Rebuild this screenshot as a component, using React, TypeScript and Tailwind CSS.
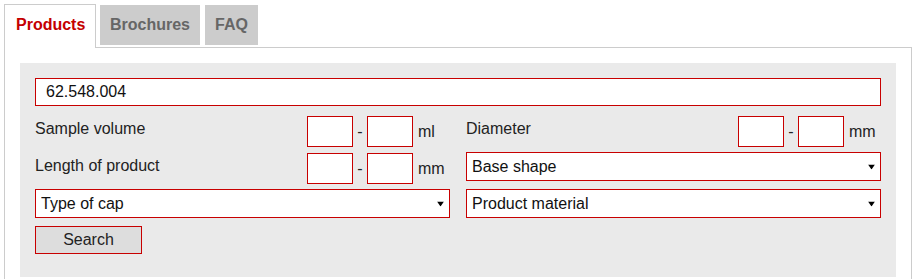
import React from "react";

const RED = "border-[#c80000]";

function Arrow() {
  return (
    <svg
      className="pointer-events-none absolute right-[6px] top-1/2 -translate-y-1/2"
      width="7"
      height="5"
      viewBox="0 0 7 5"
    >
      <polygon points="0,0 7,0 3.5,5" fill="#000" />
    </svg>
  );
}

function Select({ label, className = "" }: { label: string; className?: string }) {
  return (
    <div className={`relative h-[29px] ${className}`}>
      <select
        className={`h-full w-full appearance-none border ${RED} bg-white pl-[5px] text-[16px] text-[#111] outline-none`}
        defaultValue={label}
      >
        <option>{label}</option>
      </select>
      <Arrow />
    </div>
  );
}

function RangeRow({ label, unit }: { label: string; unit: string }) {
  return (
    <div className="flex h-[31px] items-start">
      <div className="flex-1 text-[16px] leading-[25px] text-[#222]">{label}</div>
      <input className={`h-[31px] w-[46px] border ${RED} bg-white outline-none`} />
      <span className="w-[14px] self-center text-center text-[16px] leading-[18px] text-[#222]">-</span>
      <input className={`h-[31px] w-[46px] border ${RED} bg-white outline-none`} />
      <span className="ml-[5px] w-[32px] self-center text-[16px] leading-[18px] text-[#222]">{unit}</span>
    </div>
  );
}

export default function App() {
  return (
    <div
      className="w-[916px] bg-white px-[4px] pt-[4px]"
      style={{ fontFamily: '"Liberation Sans", Arial, sans-serif' }}
    >
      <div className="-mb-px flex items-start">
        <div className="relative z-10 h-[44px] w-[92px] border border-b-0 border-[#ccc] bg-white pl-[11px] text-[16px] font-bold leading-[40px] text-[#c40000]">
          Products
        </div>
        <div className="ml-[4px] mt-px h-[40px] w-[100px] bg-[#ccc] text-center text-[16px] font-bold leading-[40px] text-[#666]">
          Brochures
        </div>
        <div className="ml-[5px] mt-px h-[40px] w-[53px] bg-[#ccc] text-center text-[16px] font-bold leading-[40px] text-[#666]">
          FAQ
        </div>
      </div>
      <div className="border border-[#ccc] p-[15px]">
        <div className="flex flex-col bg-[#eaeaea] px-[15px] pb-[23px] pt-[15px]">
          <input
            className={`h-[28px] w-full border ${RED} bg-white px-[10px] text-[16px] text-[#111] outline-none`}
            defaultValue="62.548.004"
          />
          <div className="mt-[10px] grid grid-cols-2 gap-x-[16px]">
            <RangeRow label="Sample volume" unit="ml" />
            <RangeRow label="Diameter" unit="mm" />
          </div>
          <div className="mt-[6px] grid grid-cols-2 items-start gap-x-[16px]">
            <RangeRow label="Length of product" unit="mm" />
            <Select label="Base shape" className="-mt-px" />
          </div>
          <div className="mt-[5px] grid grid-cols-2 gap-x-[16px]">
            <Select label="Type of cap" />
            <Select label="Product material" />
          </div>
          <div className="mt-[8px]">
            <button
              className={`h-[28px] w-[107px] border ${RED} bg-[#ddd] text-[16px] text-[#222]`}
            >
              Search
            </button>
          </div>
        </div>
      </div>
    </div>
  );
}
